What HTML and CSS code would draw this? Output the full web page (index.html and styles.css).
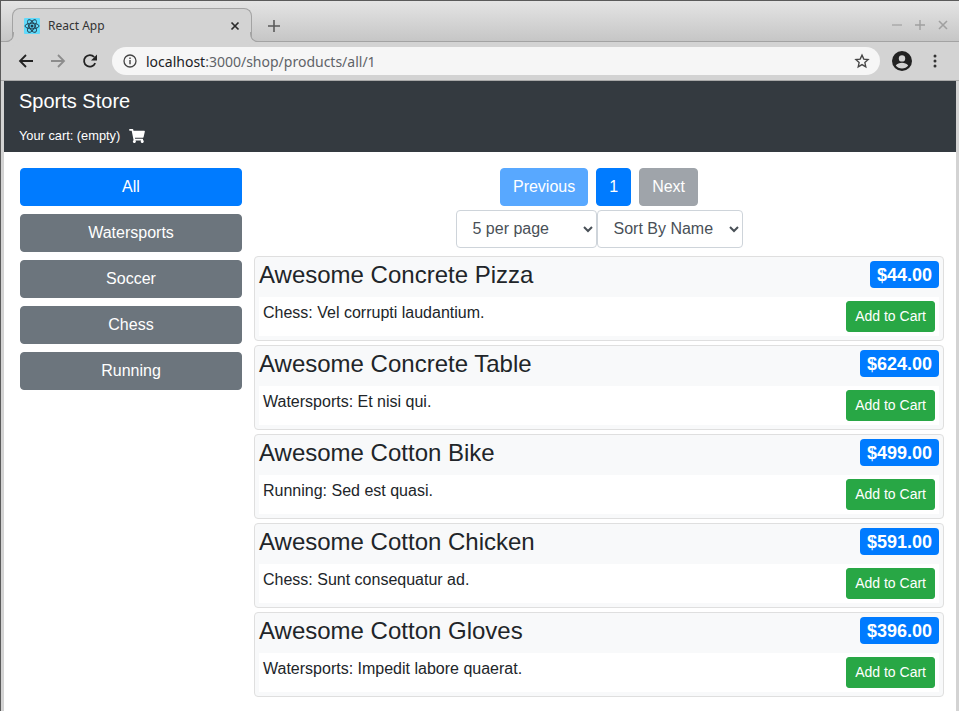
FILE: index.html
```html
<!DOCTYPE html>
<html lang="en">
<head>
    <meta charset="UTF-8">
    <title>React App</title>
    <link rel="stylesheet" href="styles.css">
</head>
<body>
    <div class="window">
        <div class="tabstrip">
            <div class="tab">
                <svg class="favicon" width="16" height="16" viewBox="0 0 16 16">
                    <rect width="16" height="16" rx="1" fill="#61dafb"/>
                    <g fill="none" stroke="#1f3a4a" stroke-width="0.9">
                        <ellipse cx="8" cy="8" rx="7" ry="2.8"/>
                        <ellipse cx="8" cy="8" rx="7" ry="2.8" transform="rotate(60 8 8)"/>
                        <ellipse cx="8" cy="8" rx="7" ry="2.8" transform="rotate(120 8 8)"/>
                    </g>
                    <circle cx="8" cy="8" r="1.5" fill="#1f3a4a"/>
                </svg>
                <span class="tab-title">React App</span>
                <svg class="tab-close" width="10" height="10" viewBox="0 0 10 10">
                    <path d="M1.5 1.5l7 7M8.5 1.5l-7 7" stroke="#2b2b2b" stroke-width="1.7" fill="none"/>
                </svg>
            </div>
            <svg class="new-tab" width="12" height="12" viewBox="0 0 12 12">
                <path d="M6 0v12M0 6h12" stroke="#5a5a5a" stroke-width="1.6" fill="none"/>
            </svg>
            <div class="window-controls">
                <svg width="10" height="10" viewBox="0 0 10 10"><path d="M0 5h10" stroke="#a8a8a8" stroke-width="1.4"/></svg>
                <svg width="10" height="10" viewBox="0 0 10 10"><path d="M0 5h10M5 0v10" stroke="#a0a0a0" stroke-width="1.4"/></svg>
                <svg width="10" height="10" viewBox="0 0 10 10"><path d="M1 1l8 8M9 1l-8 8" stroke="#a0a0a0" stroke-width="1.6"/></svg>
            </div>
        </div>
        <div class="toolbar">
            <svg class="tool" width="16" height="16" viewBox="0 0 16 16">
                <path d="M15 8H2M8 2L2 8l6 6" stroke="#222" stroke-width="1.8" fill="none"/>
            </svg>
            <svg class="tool" width="16" height="16" viewBox="0 0 16 16">
                <path d="M1 8h13M8 2l6 6-6 6" stroke="#8c8c8c" stroke-width="1.8" fill="none"/>
            </svg>
            <svg class="tool" width="16" height="16" viewBox="0 0 16 16">
                <path d="M13.2 10.2A5.8 5.8 0 1 1 12.2 4" stroke="#222" stroke-width="1.8" fill="none"/>
                <path d="M15 1.5v6H9z" fill="#222"/>
            </svg>
            <div class="omnibox">
                <svg width="14" height="14" viewBox="0 0 14 14">
                    <circle cx="7" cy="7" r="6" fill="none" stroke="#444" stroke-width="1.3"/>
                    <path d="M7 6v4.2M7 3.4v1.5" stroke="#444" stroke-width="1.4"/>
                </svg>
                <span class="url"><span class="url-host">localhost</span>:3000/shop/products/all/1</span>
                <svg class="star" width="16" height="16" viewBox="0 0 24 24">
                    <path d="M12 3.2l2.7 6 6.5.7-4.9 4.4 1.4 6.4L12 17.4l-5.7 3.3 1.4-6.4-4.9-4.4 6.5-.7z" fill="none" stroke="#444" stroke-width="2"/>
                </svg>
            </div>
            <svg class="account" width="20" height="20" viewBox="0 0 20 20">
                <circle cx="10" cy="10" r="10" fill="#222"/>
                <circle cx="10" cy="7.4" r="3.2" fill="#d3d3d3"/>
                <path d="M3.8 14.6c1.3-2 3.8-2.9 6.2-2.9s4.900.9 6.200 2.900c-1.400 1.800-3.600 2.900-6.200 2.900s-4.800-1.100-6.200-2.900z" fill="#d3d3d3"/>
            </svg>
            <svg class="menu" width="4" height="14" viewBox="0 0 4 14">
                <circle cx="2" cy="2" r="1.500" fill="#333"/>
                <circle cx="2" cy="7" r="1.500" fill="#333"/>
                <circle cx="2" cy="12" r="1.500" fill="#333"/>
            </svg>
        </div>

        <div class="page">
            <div class="navbar">
                <div class="brand">Sports Store</div>
                <div class="cart">
                    <span>Your cart: (empty)</span>
                    <svg width="16" height="14" viewBox="0 0 576 512">
                        <path fill="#fff" d="M528.12 301.319l47.273-208C578.806 78.301 567.391 67 551.99 67H159.208l-9.166-44.81C147.758 10.021 137.93 0 125.846 0H24C10.745 0 0 10.745 0 24v16c0 13.255 10.745 24 24 24h69.883l70.248 343.435C147.325 417.1 136 435.222 136 456c0 30.928 25.072 56 56 56s56-25.072 56-56c0-15.674-6.447-29.835-16.824-40h209.647C430.447 426.165 424 440.326 424 456c0 30.928 25.072 56 56 56s56-25.072 56-56c0-22.172-12.888-41.332-31.579-50.405l5.517-24.276c3.413-15.018-8.002-29.319-23.403-29.319H218.117l-6.545-32h293.145c11.206 0 20.92-7.754 23.403-18.681z"/>
                    </svg>
                </div>
            </div>
            <div class="content">
                <div class="sidebar">
                    <button class="btn btn-primary btn-block">All</button>
                    <button class="btn btn-secondary btn-block">Watersports</button>
                    <button class="btn btn-secondary btn-block">Soccer</button>
                    <button class="btn btn-secondary btn-block">Chess</button>
                    <button class="btn btn-secondary btn-block">Running</button>
                </div>
                <div class="main">
                    <div class="pager">
                        <button class="btn btn-primary btn-disabled">Previous</button>
                        <button class="btn btn-primary">1</button>
                        <button class="btn btn-secondary btn-disabled">Next</button>
                    </div>
                    <div class="selects">
                        <select class="form-select select-page">
                            <option>5 per page</option>
                        </select>
                        <select class="form-select select-sort">
                            <option>Sort By Name</option>
                        </select>
                    </div>
                    <div class="product">
                        <h4 class="product-head">
                            <span>Awesome Concrete Pizza</span>
                            <span class="price">$44.00</span>
                        </h4>
                        <div class="product-body">
                            <span>Chess: Vel corrupti laudantium.</span>
                            <button class="btn btn-success btn-sm">Add to Cart</button>
                        </div>
                    </div>
                    <div class="product">
                        <h4 class="product-head">
                            <span>Awesome Concrete Table</span>
                            <span class="price">$624.00</span>
                        </h4>
                        <div class="product-body">
                            <span>Watersports: Et nisi qui.</span>
                            <button class="btn btn-success btn-sm">Add to Cart</button>
                        </div>
                    </div>
                    <div class="product">
                        <h4 class="product-head">
                            <span>Awesome Cotton Bike</span>
                            <span class="price">$499.00</span>
                        </h4>
                        <div class="product-body">
                            <span>Running: Sed est quasi.</span>
                            <button class="btn btn-success btn-sm">Add to Cart</button>
                        </div>
                    </div>
                    <div class="product">
                        <h4 class="product-head">
                            <span>Awesome Cotton Chicken</span>
                            <span class="price">$591.00</span>
                        </h4>
                        <div class="product-body">
                            <span>Chess: Sunt consequatur ad.</span>
                            <button class="btn btn-success btn-sm">Add to Cart</button>
                        </div>
                    </div>
                    <div class="product">
                        <h4 class="product-head">
                            <span>Awesome Cotton Gloves</span>
                            <span class="price">$396.00</span>
                        </h4>
                        <div class="product-body">
                            <span>Watersports: Impedit labore quaerat.</span>
                            <button class="btn btn-success btn-sm">Add to Cart</button>
                        </div>
                    </div>
                </div>
            </div>
        </div>
    </div>
</body>
</html>
```

FILE: styles.css
```css
* {
    box-sizing: border-box;
}
html, body {
    margin: 0;
    height: 100%;
    overflow: hidden;
}
body {
    font-family: "Liberation Sans", Arial, sans-serif;
    font-size: 16px;
    line-height: 1.5;
    color: #212529;
    background-color: #fff;
}
.window {
    height: 711px;
    display: flex;
    flex-direction: column;
    border-top: 1px solid #5a5a5a;
    border-left: 1px solid #5a5a5a;
    background-color: #d3d3d3;
}

/* browser chrome */
.tabstrip {
    height: 41px;
    flex: none;
    display: flex;
    align-items: flex-end;
    padding-left: 11px;
    border-bottom: 1px solid #a3a3a3;
    background: linear-gradient(#e4e4e4, #c6c6c6);
}
.tab {
    position: relative;
    width: 240px;
    height: 34px;
    margin-bottom: -1px;
    display: flex;
    align-items: center;
    padding: 0 11px;
    border: 1px solid #a3a3a3;
    border-bottom: none;
    border-radius: 8px 8px 0 0;
    background-color: #d3d3d3;
}
/* the curved feet of the active tab */
.tab::before,
.tab::after {
    content: "";
    position: absolute;
    bottom: 0;
    width: 9px;
    height: 9px;
    border-bottom: 1px solid #a3a3a3;
}
.tab::before {
    left: -9px;
    border-right: 1px solid #a3a3a3;
    border-bottom-right-radius: 8px;
    box-shadow: 4px 4px 0 #d3d3d3;
}
.tab::after {
    right: -9px;
    border-left: 1px solid #a3a3a3;
    border-bottom-left-radius: 8px;
    box-shadow: -4px 4px 0 #d3d3d3;
}
.favicon {
    flex: none;
}
.tab-title {
    flex: 1;
    margin-left: 8px;
    font-family: "Noto Sans", sans-serif;
    font-size: 12px;
    color: #333;
}
.new-tab {
    margin: 0 0 9px 16px;
}
.window-controls {
    margin-left: auto;
    display: flex;
    gap: 13px;
    padding: 0 11px 11px 0;
}
.toolbar {
    height: 39px;
    flex: none;
    display: flex;
    align-items: center;
    padding: 0 22px 0 17px;
    border-bottom: 1px solid #a9a9a9;
    background-color: #d3d3d3;
}
.tool {
    flex: none;
    margin-right: 16px;
}
.omnibox {
    flex: 1;
    height: 28px;
    margin-left: -2px;
    display: flex;
    align-items: center;
    padding: 0 10px 0 11px;
    border-radius: 14px;
    background-color: #f6f6f6;
}
.url {
    flex: 1;
    margin-left: 9px;
    font-family: "Noto Sans", sans-serif;
    font-size: 14px;
    color: #5f6368;
}
.url-host {
    color: #202124;
}
.account {
    margin-left: 12px;
}
.menu {
    margin-left: 21px;
}

/* page */
.page {
    flex: 1;
    min-height: 0;
    margin: 0 3px 0 3px;
    background-color: #fff;
}
.navbar {
    height: 71px;
    padding: 8px 15px;
    color: #fff;
    background-color: #343a40;
}
.brand {
    font-size: 20px;
    line-height: 24px;
}
.cart {
    margin-top: 13px;
    display: flex;
    align-items: center;
    gap: 9px;
    font-size: 12.8px;
    line-height: 20px;
}
.content {
    display: flex;
    gap: 12px;
    padding: 16px 12px 0 16px;
}
.sidebar {
    width: 222px;
    flex: none;
    display: flex;
    flex-direction: column;
    gap: 8px;
}
.main {
    flex: 1;
    min-width: 0;
}
.btn {
    padding: 6px 12px;
    border: 1px solid transparent;
    border-radius: 4px;
    font-family: inherit;
    font-size: 16px;
    line-height: 24px;
    color: #fff;
    cursor: pointer;
}
.btn-block {
    width: 100%;
}
.btn-primary {
    background-color: #007bff;
    border-color: #007bff;
}
.btn-secondary {
    background-color: #6c757d;
    border-color: #6c757d;
}
.btn-success {
    background-color: #28a745;
    border-color: #28a745;
}
.btn-disabled {
    opacity: 0.65;
}
.btn-sm {
    padding: 4px 8px;
    font-size: 14px;
    line-height: 21px;
    border-radius: 3px;
}
.pager {
    display: flex;
    justify-content: center;
    gap: 8px;
}
.selects {
    display: flex;
    justify-content: center;
    margin-top: 4px;
    margin-bottom: 8px;
}
.form-select {
    height: 38px;
    padding: 5px 12px 7px;
    border: 1px solid #ced4da;
    border-radius: 4px;
    font-family: inherit;
    font-size: 16px;
    color: #495057;
    background-color: #fff;
}
.select-page {
    width: 141px;
}
.select-sort {
    width: 146px;
}
.product {
    height: 85px;
    margin-bottom: 4px;
    padding: 0 4px;
    border: 1px solid #dfdfdf;
    border-radius: 4px;
    background-color: #f8f9fa;
}
.product-head {
    height: 40px;
    margin: 0;
    padding-top: 3px;
    display: flex;
    justify-content: space-between;
    align-items: flex-start;
    font-size: 24px;
    font-weight: 500;
    line-height: 29px;
}
.price {
    margin-top: 1px;
    padding: 4px 7px 3px;
    border-radius: 4px;
    font-size: 18px;
    font-weight: 700;
    line-height: 20px;
    color: #fff;
    background-color: #007bff;
}
.product-body {
    height: 39px;
    display: flex;
    justify-content: space-between;
    align-items: flex-start;
    padding: 4px;
    background-color: #fff;
}
```
